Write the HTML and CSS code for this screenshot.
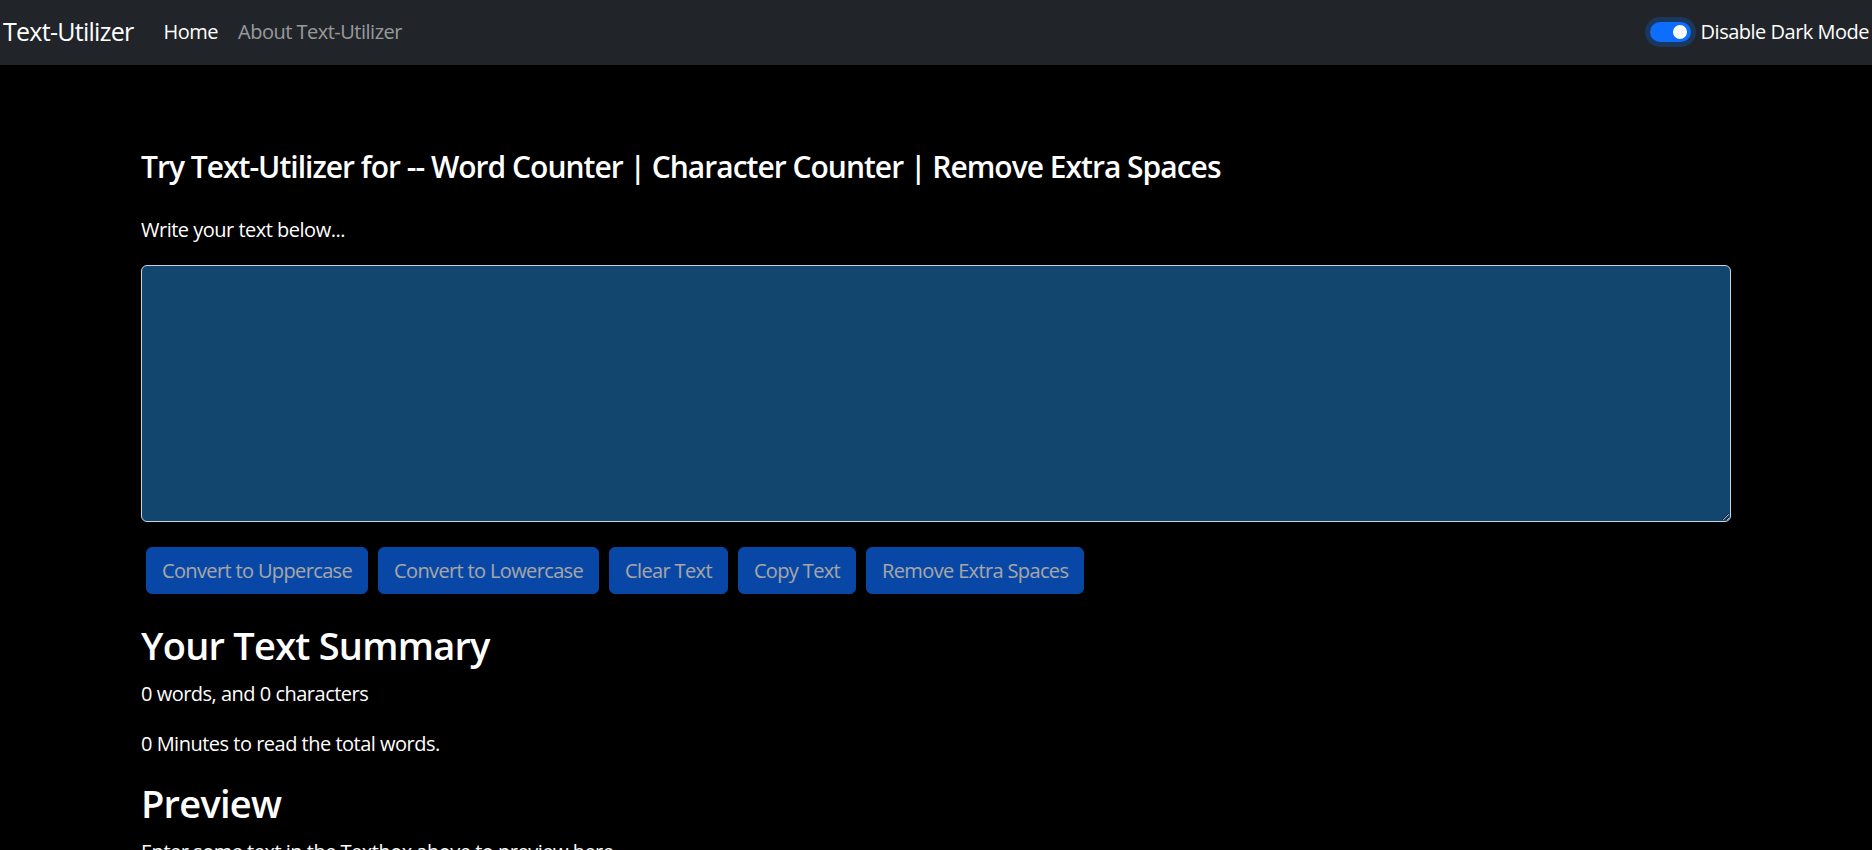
FILE: index.html
```html
<!DOCTYPE html>
<html lang="en">
<head>
<meta charset="utf-8">
<title>Text-Utilizer</title>
<link rel="stylesheet" href="styles.css">
</head>
<body>
<nav class="navbar">
  <div class="nav-left">
    <a class="brand" href="#">Text-Utilizer</a>
    <ul class="nav-links">
      <li><a class="nav-link active" href="#">Home</a></li>
      <li><a class="nav-link" href="#">About Text-Utilizer</a></li>
    </ul>
  </div>
  <div class="mode-switch">
    <span class="switch"><span class="knob"></span></span>
    <span class="switch-label">Disable Dark Mode</span>
  </div>
</nav>
<main class="container">
  <section class="editor">
    <h1 class="title">Try Text-Utilizer for -- Word Counter | Character Counter | Remove Extra Spaces</h1>
    <label class="field-label" for="box">Write your text below...</label>
    <textarea id="box" class="textbox"></textarea>
    <div class="actions">
      <button class="btn" disabled>Convert to Uppercase</button>
      <button class="btn" disabled>Convert to Lowercase</button>
      <button class="btn" disabled>Clear Text</button>
      <button class="btn" disabled>Copy Text</button>
      <button class="btn" disabled>Remove Extra Spaces</button>
    </div>
  </section>
  <section class="summary">
    <h2 class="section-title">Your Text Summary</h2>
    <p class="text">0 words, and 0 characters</p>
    <p class="text">0 Minutes to read the total words.</p>
    <h2 class="section-title">Preview</h2>
    <p class="text">Enter some text in the Textbox above to preview here.</p>
  </section>
</main>
</body>
</html>
```

FILE: styles.css
```css
html {
  scrollbar-width: none;
}
body {
  margin: 0;
  background: #000;
  color: #fff;
  font-family: "Open Sans", "Noto Sans", sans-serif;
  font-size: 20px;
  line-height: 1.5;
  letter-spacing: -0.025em;
}
.navbar {
  box-sizing: border-box;
  height: 65px;
  padding: 0 3px 2px;
  background: #212529;
  display: flex;
  align-items: center;
  justify-content: space-between;
}
.nav-left {
  display: flex;
  align-items: center;
}
.brand {
  color: #fff;
  text-decoration: none;
  font-size: 25px;
  letter-spacing: -0.029em;
  margin-right: 20px;
}
.nav-links {
  list-style: none;
  margin: 0;
  padding: 0;
  display: flex;
}
.nav-link {
  display: block;
  padding: 0 10px;
  color: rgba(255, 255, 255, 0.55);
  text-decoration: none;
}
.nav-link.active {
  color: #fff;
}
.mode-switch {
  display: flex;
  align-items: center;
}
.switch {
  position: relative;
  width: 41px;
  height: 20px;
  border-radius: 10px;
  background: #0d6efd;
  box-shadow: 0 0 0 5px rgba(13, 110, 253, 0.25);
  margin-right: 10px;
}
.knob {
  position: absolute;
  right: 4px;
  top: 3px;
  width: 14px;
  height: 14px;
  border-radius: 50%;
  background: #fff;
}
.container {
  width: 1590px;
  margin: 0 auto;
  padding-top: 20px;
}
.title {
  font-size: 30px;
  font-weight: 600;
  line-height: 36px;
  letter-spacing: -0.033em;
  margin: 64px 0 30px;
}
.field-label {
  display: block;
  margin-bottom: 20px;
}
.textbox {
  display: block;
  box-sizing: border-box;
  width: 100%;
  height: 257px;
  margin: 0 0 20px;
  background: #13466f;
  color: #fff;
  border: 1px solid #ced4da;
  border-radius: 6px;
  font: inherit;
  padding: 7px 15px;
}
.actions {
  display: flex;
  flex-wrap: wrap;
}
.btn {
  margin: 5px;
  padding: 7.5px 15px;
  font: inherit;
  line-height: 30px;
  letter-spacing: -0.032em;
  color: #fff;
  background: #0d6efd;
  border: 1px solid #0d6efd;
  border-radius: 6px;
  opacity: 0.65;
}
.summary {
  padding-top: 22px;
}
.section-title {
  font-size: 38px;
  font-weight: 600;
  line-height: 48px;
  letter-spacing: -0.02em;
  margin: 0 0 10px;
}
.text {
  margin: 0 0 20px;
}
```
